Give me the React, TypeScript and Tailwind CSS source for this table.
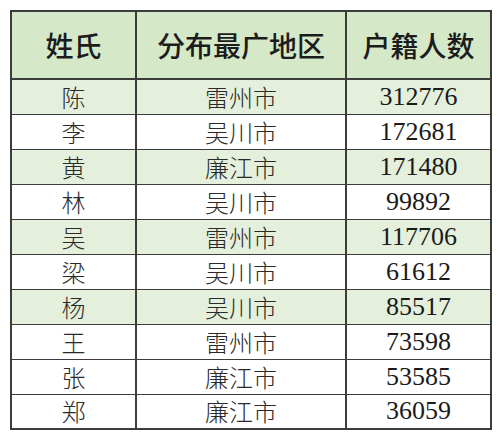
const rows: [string, string, string][] = [
  ["陈", "雷州市", "312776"],
  ["李", "吴川市", "172681"],
  ["黄", "廉江市", "171480"],
  ["林", "吴川市", "99892"],
  ["吴", "雷州市", "117706"],
  ["梁", "吴川市", "61612"],
  ["杨", "吴川市", "85517"],
  ["王", "雷州市", "73598"],
  ["张", "廉江市", "53585"],
  ["郑", "廉江市", "36059"],
];

export default function App() {
  return (
    <div className="h-[438px] w-[500px] bg-white p-[10px] font-['Noto_Sans_CJK_SC',sans-serif]">
      <table className="w-[480px] table-fixed border-collapse border-2 border-[#3c3c3c] text-[#1c1c1c]">
        <colgroup>
          <col className="w-[125px]" />
          <col className="w-[210px]" />
          <col className="w-[145px]" />
        </colgroup>
        <thead>
          <tr className="h-[68px] bg-[#d5e8c8]">
            {["姓氏", "分布最广地区", "户籍人数"].map((h) => (
              <th
                key={h}
                className="border-2 border-[#3c3c3c] text-center text-[28px] font-medium leading-none"
              >
                {h}
              </th>
            ))}
          </tr>
        </thead>
        <tbody>
          {rows.map(([name, city, count], i) => (
            <tr
              key={name}
              className={`h-[35px] ${i % 2 === 0 && i < 7 ? "bg-[#e4f0dc]" : "bg-white"}`}
            >
              <td className="border-x-2 border-y-[1.5px] border-[#3c3c3c] text-center text-[24px] font-light leading-none text-[#2a2a2a]">
                {name}
              </td>
              <td className="border-x-2 border-y-[1.5px] border-[#3c3c3c] text-center text-[24px] font-light leading-none text-[#2a2a2a]">
                {city}
              </td>
              <td className="border-x-2 border-y-[1.5px] border-[#3c3c3c] text-center font-['Liberation_Serif',serif] text-[26px] leading-none text-[#1a1a1a]">
                {count}
              </td>
            </tr>
          ))}
        </tbody>
      </table>
    </div>
  );
}
